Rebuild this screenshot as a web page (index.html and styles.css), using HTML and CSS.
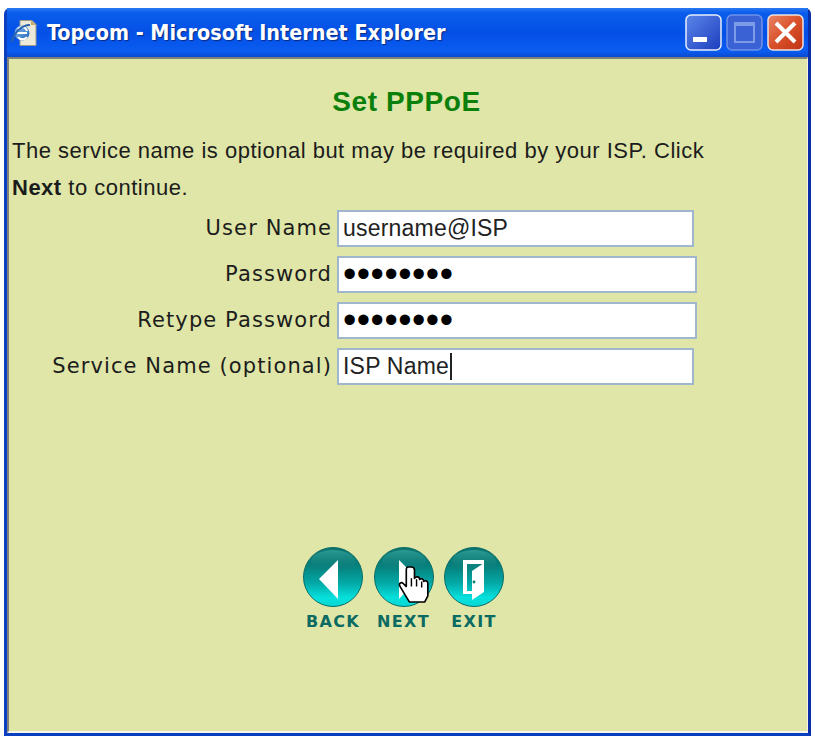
FILE: index.html
```html
<!DOCTYPE html>
<html lang="en">
<head>
<meta charset="utf-8">
<title>Topcom - Microsoft Internet Explorer</title>
<link rel="stylesheet" href="styles.css">
</head>
<body>
<svg class="defs" width="0" height="0" aria-hidden="true">
  <defs>
    <linearGradient id="disc" x1="0" y1="0" x2="0" y2="1">
      <stop offset="0" stop-color="#0b7470"/>
      <stop offset=".3" stop-color="#067f7b"/>
      <stop offset=".6" stop-color="#03a8a6"/>
      <stop offset=".85" stop-color="#06e0dc"/>
      <stop offset="1" stop-color="#0ad8d4"/>
    </linearGradient>
    <linearGradient id="hl" x1="0" y1="0" x2="0" y2="1">
      <stop offset="0" stop-color="#2f9f97" stop-opacity=".9"/>
      <stop offset="1" stop-color="#0b7470" stop-opacity="0"/>
    </linearGradient>
    <linearGradient id="min" x1="0" y1="0" x2="1" y2="1">
      <stop offset="0" stop-color="#5c86ea"/>
      <stop offset="1" stop-color="#1c3dbd"/>
    </linearGradient>
    <linearGradient id="close" x1="0" y1="0" x2="1" y2="1">
      <stop offset="0" stop-color="#e98567"/>
      <stop offset=".5" stop-color="#d9512a"/>
      <stop offset="1" stop-color="#bf3313"/>
    </linearGradient>
    <linearGradient id="globe" x1="0" y1="0" x2="1" y2="1">
      <stop offset="0" stop-color="#8cc4f0"/>
      <stop offset="1" stop-color="#1c5fb8"/>
    </linearGradient>
  </defs>
</svg>
<main class="window">
  <header class="titlebar">
    <svg class="app-icon" viewBox="0 0 28 28" width="28" height="28" aria-hidden="true">
      <path d="M10 1.5h12l4 4v21H10z" fill="#ece9d8" stroke="#9a998c"/>
      <path d="M21 1l5 5h-5z" fill="#c9a86a"/>
      <circle cx="12" cy="14" r="7.5" fill="url(#globe)"/>
      <path d="M7 14h10M8 10c3-3 8-2 9 2M8 18c2 3 7 3 9 0" fill="none" stroke="#fff" stroke-width="2"/>
      <path d="M2 23C3 15 11 6 20 6" fill="none" stroke="#2a62ac" stroke-width="2"/>
    </svg>
    <h1 class="window-title">Topcom - Microsoft Internet Explorer</h1>
    <div class="controls">
      <svg viewBox="0 0 37 37" width="37" height="37" aria-hidden="true">
        <rect x="1" y="1" width="35" height="35" rx="5" fill="url(#min)" stroke="#e8eefc" stroke-width="1.5"/>
        <rect x="8" y="23" width="14" height="5" fill="#fff"/>
      </svg>
      <svg viewBox="0 0 37 37" width="37" height="37" aria-hidden="true">
        <rect x="1" y="1" width="35" height="35" rx="5" fill="#3a62d4" stroke="#6f92e8" stroke-width="1.5"/>
        <rect x="9" y="9" width="19" height="19" fill="none" stroke="#7d9be6" stroke-width="2"/>
        <rect x="8" y="8" width="21" height="4" fill="#7d9be6"/>
      </svg>
      <svg viewBox="0 0 37 37" width="37" height="37" aria-hidden="true">
        <rect x="1" y="1" width="35" height="35" rx="5" fill="url(#close)" stroke="#f0e4de" stroke-width="1.5"/>
        <path d="M9 9l19 19M28 9L9 28" stroke="#fff" stroke-width="4"/>
      </svg>
    </div>
  </header>
  <div class="page">
    <h2 class="heading">Set PPPoE</h2>
    <p class="intro">The service name is optional but may be required by your ISP. Click <b>Next</b> to continue.</p>
    <form class="fields">
      <label class="field"><span class="field-label">User Name</span><input class="input short" type="text" value="username@ISP"></label>
      <label class="field"><span class="field-label">Password</span><input class="input pass" type="password" value="12345678"></label>
      <label class="field"><span class="field-label">Retype Password</span><input class="input pass" type="password" value="12345678"></label>
      <label class="field"><span class="field-label">Service Name (optional)</span><span class="input short faux">ISP Name<i class="caret"></i></span></label>
    </form>
    <nav class="nav">
      <a class="nav-btn">
        <svg viewBox="0 0 60 60" width="60" height="60" aria-hidden="true">
          <circle cx="30" cy="30" r="29.5" fill="url(#disc)" stroke="#0b6d66" stroke-width="1"/>
          <ellipse cx="30" cy="15" rx="22" ry="12" fill="url(#hl)"/>
          <path d="M35 13v39L16 32z" fill="#fff"/>
        </svg>
        <span>BACK</span>
      </a>
      <a class="nav-btn">
        <svg viewBox="0 0 60 60" width="60" height="60" aria-hidden="true">
          <circle cx="30" cy="30" r="29.5" fill="url(#disc)" stroke="#0b6d66" stroke-width="1"/>
          <ellipse cx="30" cy="15" rx="22" ry="12" fill="url(#hl)"/>
          <path d="M25 13v39l19-20z" fill="#fff"/>
        </svg>
        <span>NEXT</span>
        <svg class="hand" viewBox="0 0 32 38" width="33" height="39" aria-hidden="true">
          <path d="M10 2c-2 0-2 1-2 3v16l-3-3c-2-2-5 0-3 3l6 10 3 5h15l3-6V18c0-3-3-3-4-2 0-3-3-3-4-2 0-3-4-3-5-1V5c0-2-1-3-3-3z" fill="#fff" stroke="#000" stroke-width="1.6" stroke-linejoin="round"/>
          <path d="M13 13v8M18 14v7M23 16v6" stroke="#000" stroke-width="1.4" fill="none"/>
        </svg>
      </a>
      <a class="nav-btn">
        <svg viewBox="0 0 60 60" width="60" height="60" aria-hidden="true">
          <circle cx="30" cy="30" r="29.5" fill="url(#disc)" stroke="#0b6d66" stroke-width="1"/>
          <ellipse cx="30" cy="15" rx="22" ry="12" fill="url(#hl)"/>
          <path d="M19 13h21v4H23v27h5v3h-9z" fill="#fff"/>
          <path d="M40 16v29L28 53V24z" fill="#fff"/>
          <circle cx="30" cy="35" r="1.4" fill="#0a7a76"/>
        </svg>
        <span>EXIT</span>
      </a>
    </nav>
  </div>
</main>
</body>
</html>
```

FILE: styles.css
```css
* { box-sizing: border-box; }
html, body { margin: 0; background: #fff; }
body { width: 815px; height: 740px; padding: 8px 4px 4px 4px; overflow: hidden; }
.defs { position: absolute; }
.window {
  width: 807px;
  height: 728px;
  display: flex;
  flex-direction: column;
  background: #0a50d8;
  border: 3px solid #0a3fc0;
  border-right-color: #0a2fa8;
  border-top: 0;
  border-radius: 6px 6px 0 0;
}
.titlebar {
  height: 49px;
  flex: none;
  display: flex;
  align-items: center;
  padding: 0 4px 0 3px;
  background: linear-gradient(#2a78f2 0, #0a5cec 10%, #0550e6 50%, #0a5cf0 88%, #0a4ad0 100%);
}
.app-icon { flex: none; margin-right: 9px; }
.window-title {
  margin: 0;
  flex: 1;
  font: bold 21.4px/1 "DejaVu Sans Condensed", "DejaVu Sans", sans-serif;
  color: #fff;
  text-shadow: 1px 1px 1px #0b2a80;
}
.controls { display: flex; gap: 4px; flex: none; }
.page {
  flex: 1;
  background: #dfe6a8;
  border-top: 2px solid #7f8278;
  border-left: 2px solid #7f8278;
  border-right: 1px solid #f4f3e4;
  border-bottom: 2px solid #f7f6ea;
  padding: 28px 0 0 3px;
}
.heading {
  margin: 0;
  padding-right: 6px;
  text-align: center;
  color: #0a800a;
  font: bold 28px/30px "Liberation Sans", sans-serif;
  letter-spacing: .6px;
}
.intro {
  margin: 15px 0 0 0;
  width: 730px;
  font: 22px/37px "Liberation Sans", sans-serif;
  letter-spacing: .5px;
  color: #1c1c1c;
}
.fields { display: flex; flex-direction: column; gap: 9px; margin-top: 4px; }
.field { display: flex; align-items: center; height: 37px; }
.field-label {
  width: 320px;
  text-align: right;
  font: 21px/37px "DejaVu Sans", sans-serif;
  letter-spacing: 1.1px;
  color: #1c1c1c;
  margin-right: 5px;
  white-space: nowrap;
}
.input {
  height: 37px;
  border: 2px solid #9fb6cc;
  background: #fff;
  padding: 0 4px;
  font: 23px/33px "Liberation Sans", sans-serif;
  letter-spacing: .2px;
  color: #222;
  outline: none;
}
.short { width: 357px; }
.pass { width: 360px; font-size: 38px; line-height: 33px; letter-spacing: .5px; color: #000; }
.faux { display: flex; align-items: center; }
.caret { display: inline-block; width: 1.5px; height: 27px; background: #222; margin-left: 1px; }
.nav {
  display: flex;
  gap: 10.5px;
  margin: 162px 0 0 291px;
}
.nav-btn { position: relative; display: flex; flex-direction: column; align-items: center; width: 60px; }
.nav-btn span {
  font: bold 16px/16px "DejaVu Sans", sans-serif;
  letter-spacing: 1.3px;
  color: #0b6a62;
  margin-top: 7px;
}
.hand { position: absolute; left: 24px; top: 18px; }
```
